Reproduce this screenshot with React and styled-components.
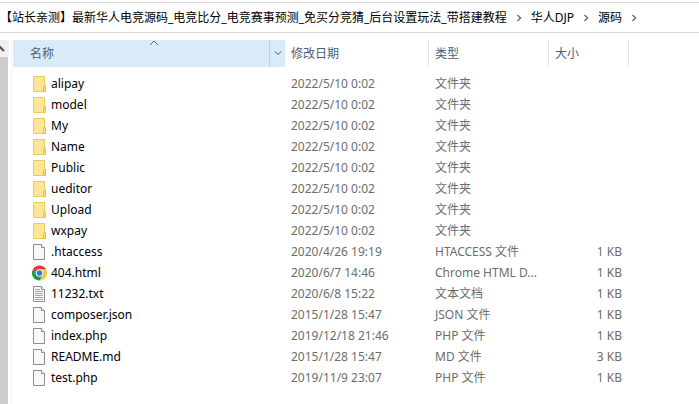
import React from 'react';
import styled, { createGlobalStyle } from 'styled-components';

const GlobalStyle = createGlobalStyle`
  * { box-sizing: border-box; }

  body {
    margin: 0;
    background: #fff;
    color: #000;
    font: 12px/20px "Noto Sans", "Noto Sans CJK SC", sans-serif;
    text-spacing-trim: space-all;
  }

  button {
    padding: 0;
    border: 0;
    background: none;
    color: inherit;
    font: inherit;
  }
`

const Explorer = styled.div`
  display: flex;
  flex-direction: column;
  min-height: 100vh;
  padding-top: 2px;
  overflow: hidden;
`

const AddressBar = styled.nav`
  display: flex;
  align-items: center;
  height: 31px;
  border: solid #d9d9d9;
  border-width: 1px 0;
  white-space: nowrap;
`

const Crumb = styled.a`
  color: #000;
  text-decoration: none;
`

const CrumbArrow = styled.svg`
  flex: none;
  width: 24px;
  height: 8px;
`

const Body = styled.div`
  display: flex;
  flex: 1;
  padding-top: 7px;
`

const ScrollBar = styled.div`
  flex: none;
  width: 8px;
  background: #cdcdcd;
`

const ScrollUp = styled.button`
  display: block;
  width: 9px;
  height: 17px;
  background: #f0f0f0;
`

const FilePane = styled.main`
  flex: 1;
  min-width: 0;
  margin-left: 3px;
  border-left: 1px solid #f2f2f2;
  padding-left: 1px;
`

const FileTable = styled.table`
  width: 100%;
  table-layout: fixed;
  border-collapse: separate;
  border-spacing: 0;

  thead::after {
    content: "";
    display: block;
    height: 6px;
  }
`

const Column = styled.col`
  width: ${props => props.$width};
`

const HeadCell = styled.th`
  position: relative;
  height: 27px;
  padding: 0 0 0 ${props => props.$sorted ? '17px' : '6px'};
  border-right: ${props => props.$sorted ? '0' : '1px solid #e5e5e5'};
  background: ${props => props.$sorted ? '#d9ebf9' : 'transparent'};
  color: #4c607a;
  font-weight: normal;
  text-align: left;
`

const HeadContent = styled.div`
  display: flex;
  align-items: center;
  justify-content: space-between;
  height: 27px;
`

const SortMark = styled.svg`
  position: absolute;
  top: 0;
  left: 50%;
  width: 10px;
  height: 6px;
`

const FilterButton = styled.button`
  display: flex;
  align-items: center;
  justify-content: center;
  width: 16px;
  height: 27px;
  border-left: 1px solid #b8cfe0;
`

const Cell = styled.td`
  height: 21px;
  padding: 0 7px 0 6px;
  overflow: hidden;
  color: #6d6d6d;
  text-align: ${props => props.$right ? 'right' : 'left'};
  text-overflow: ellipsis;
  white-space: nowrap;
`

const NameCell = styled(Cell)`
  padding-left: 19px;
  color: #000;
`

const FileName = styled.div`
  display: flex;
  align-items: center;
  gap: 4px;
`

const Icon = styled.svg`
  flex: none;
  width: 15px;
  height: 16px;
`

const FolderIcon = () => (
  <Icon viewBox="0 0 15 16" aria-hidden="true">
    <path d="M1.5.5h11v9h1v6h-12z" fill="#ffe596" stroke="#ebcb5c" />
    <path d="M11.5 15V10.500q0-1 1-1h1v6h-2z" fill="#fbdc7c" stroke="#e6c04a" />
  </Icon>
)

const PageIcon = ({ lines }) => (
  <Icon viewBox="0 0 15 16" aria-hidden="true">
    <path d="M1.500.5h8l3 3v12h-11z" fill="#f7f8f9" stroke="#8e8e8e" />
    <path d="M9.500.5v3h3" fill="#fff" stroke="#8e8e8e" />
    {lines && <path d="M3 3.500h5M3 5.500h8M3 7.500h8M3 9.500h8M3 11.500h8M3 13.500h8" stroke="#a5a5a5" />}
  </Icon>
)

const ChromeIcon = () => (
  <Icon viewBox="0 0 48 48" aria-hidden="true">
    <path d="M24 12H44.8A24 24 0 0 1 24 48L34.4 30z" fill="#fcc934" />
    <path d="M24 12H44.8A24 24 0 0 0 3.2 12L13.6 30z" fill="#e33b2e" />
    <path d="M34.4 30L24 48A24 24 0 0 1 3.2 12L13.6 30z" fill="#1e9b4b" />
    <circle cx="24" cy="24" r="12" fill="#fff" />
    <circle cx="24" cy="24" r="9" fill="#2f79e8" />
  </Icon>
)

const icons = {
  folder: <FolderIcon />,
  page: <PageIcon />,
  text: <PageIcon lines />,
  chrome: <ChromeIcon />
}

const crumbs = [
  '【站长亲测】最新华人电竞源码_电竞比分_电竞赛事预测_免买分竞猜_后台设置玩法_带搭建教程',
  '华人DJP',
  '源码'
]

const folders = ['alipay', 'model', 'My', 'Name', 'Public', 'ueditor', 'Upload', 'wxpay']

const files = [
  ...folders.map(name => ({ name, icon: 'folder', date: '2022/5/10 0:02', type: '文件夹', size: '' })),
  { name: '.htaccess', icon: 'page', date: '2020/4/26 19:19', type: 'HTACCESS 文件', size: '1 KB' },
  { name: '404.html', icon: 'chrome', date: '2020/6/7 14:46', type: 'Chrome HTML D...', size: '1 KB' },
  { name: '11232.txt', icon: 'text', date: '2020/6/8 15:22', type: '文本文档', size: '1 KB' },
  { name: 'composer.json', icon: 'page', date: '2015/1/28 15:47', type: 'JSON 文件', size: '1 KB' },
  { name: 'index.php', icon: 'page', date: '2019/12/18 21:46', type: 'PHP 文件', size: '1 KB' },
  { name: 'README.md', icon: 'page', date: '2015/1/28 15:47', type: 'MD 文件', size: '3 KB' },
  { name: 'test.php', icon: 'page', date: '2019/11/9 23:07', type: 'PHP 文件', size: '1 KB' }
]

const App = () => (
  <Explorer>
    <GlobalStyle />
    <AddressBar>
      {crumbs.map(crumb => (
        <React.Fragment key={crumb}>
          <Crumb href="#">{crumb}</Crumb>
          <CrumbArrow viewBox="0 0 24 8" aria-hidden="true">
            <path d="M10.5 1l3 3-3 3" fill="none" stroke="#707070" strokeWidth="1.5" />
          </CrumbArrow>
        </React.Fragment>
      ))}
    </AddressBar>
    <Body>
      <ScrollBar>
        <ScrollUp aria-label="向上滚动">
          <svg width="9" height="17" viewBox="0 0 9 17" aria-hidden="true">
            <path d="M-4 11l4-4 4 4" fill="none" stroke="#505050" strokeWidth="2" />
          </svg>
        </ScrollUp>
      </ScrollBar>
      <FilePane>
        <FileTable>
          <colgroup>
            <Column $width="272px" />
            <Column $width="144px" />
            <Column $width="120px" />
            <Column $width="80px" />
            <Column $width="auto" />
          </colgroup>
          <thead>
            <tr>
              <HeadCell $sorted aria-sort="ascending">
                <SortMark viewBox="0 0 10 6" aria-hidden="true">
                  <path d="M1 5l4-4 4 4" fill="none" stroke="#5c6b78" />
                </SortMark>
                <HeadContent>
                  <button>名称</button>
                  <FilterButton aria-label="筛选">
                    <svg width="8" height="5" viewBox="0 0 8 5" aria-hidden="true">
                      <path d="M1 .5l3 3 3-3" fill="none" stroke="#44515e" />
                    </svg>
                  </FilterButton>
                </HeadContent>
              </HeadCell>
              <HeadCell><button>修改日期</button></HeadCell>
              <HeadCell><button>类型</button></HeadCell>
              <HeadCell><button>大小</button></HeadCell>
              <td />
            </tr>
          </thead>
          <tbody>
            {files.map(file => (
              <tr key={file.name}>
                <NameCell>
                  <FileName>
                    {icons[file.icon]}
                    {file.name}
                  </FileName>
                </NameCell>
                <Cell>{file.date}</Cell>
                <Cell>{file.type}</Cell>
                <Cell $right>{file.size}</Cell>
                <td />
              </tr>
            ))}
          </tbody>
        </FileTable>
      </FilePane>
    </Body>
  </Explorer>
)

export default App;
